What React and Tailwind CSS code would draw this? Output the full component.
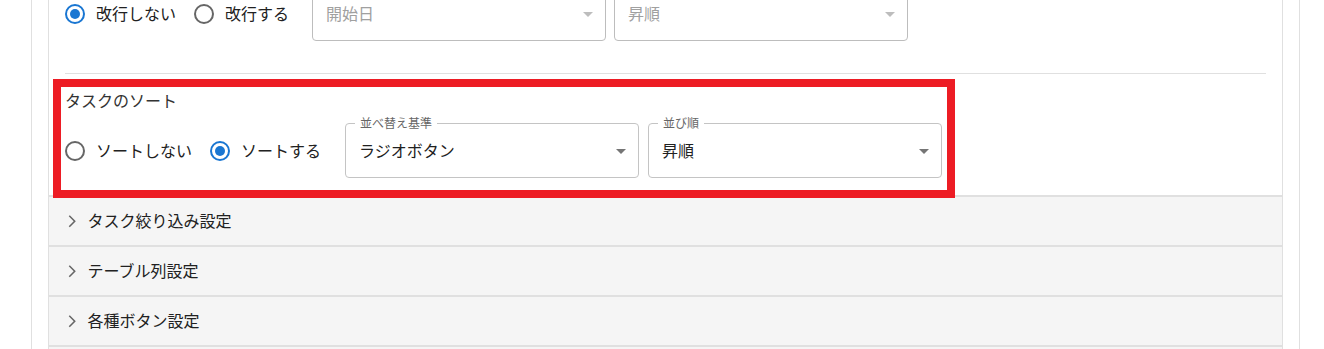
import React from 'react'

const Radio = ({ checked, label }) => (
  <label className="flex items-center">
    <span className={`flex h-5 w-5 items-center justify-center rounded-full border-2 ${checked ? 'border-[#1976d2]' : 'border-[#666]'}`}>
      {checked && <span className="h-2.5 w-2.5 rounded-full bg-[#1976d2]" />}
    </span>
    <span className="ml-[11px] pb-[2px] text-base leading-6 text-[#212121]">{label}</span>
  </label>
)

const Select = ({ label, value, disabled }) => (
  <div className={`relative flex h-[55px] w-[294px] items-center rounded border pl-[13px] ${disabled ? 'border-[#bdbdbd]' : 'border-[#c4c4c4]'}`}>
    {label && (
      <span className="absolute -top-[9px] left-[9px] bg-white px-[5px] text-xs leading-4 text-[#666]">{label}</span>
    )}
    <span className={`pb-[2px] text-base leading-6 ${disabled ? 'text-[#a0a0a0]' : 'text-[#212121]'}`}>{value}</span>
    <svg viewBox="0 0 24 24" className={`absolute right-[5px] top-1/2 h-6 w-6 -translate-y-1/2 ${disabled ? 'fill-[#bdbdbd]' : 'fill-[#757575]'}`}>
      <path d="M7 10l5 5 5-5z" />
    </svg>
  </div>
)

const AccordionRow = ({ title }) => (
  <div className="flex h-[50px] items-center border-t-2 border-[#e0e0e0] bg-[#f5f5f5] px-4">
    <svg viewBox="0 0 24 24" className="h-[14.4px] w-[14.4px] fill-[#666]">
      <path d="M6.23 20.23 8 22l10-10L8 2 6.23 3.77 14.46 12z" />
    </svg>
    <span className="ml-2 pb-[3px] text-base leading-6 text-[#212121]">{title}</span>
  </div>
)

export default function App() {
  return (
    <div className="h-[349px] w-[1324px] overflow-hidden bg-white font-['Noto_Sans_CJK_JP','Noto_Sans',sans-serif]">
      <div className="ml-[31px] flex h-full w-[1269px] flex-col border-x border-[#e0e0e0] px-4">
        <div className="-mt-[14px] border-x border-[#e0e0e0] bg-white">
          {/* 改行設定 */}
          <div className="px-4 pb-[32px]">
            <div className="flex h-[55px] items-center">
              <div className="flex gap-[18px]">
                <Radio checked label="改行しない" />
                <Radio label="改行する" />
              </div>
              <div className="ml-[23px] flex gap-[8px]">
                <Select value="開始日" disabled />
                <Select value="昇順" disabled />
              </div>
            </div>
          </div>
          <div className="mx-4 border-t border-[#e0e0e0]" />

          {/* タスクのソート */}
          <div className="relative px-4 pb-[17px] pt-[14px]">
            <div className="pb-[1px] text-base leading-6 text-[#333]">タスクのソート</div>
            <div className="mt-[10px] flex h-[55px] items-center">
              <div className="flex gap-[18px]">
                <Radio label="ソートしない" />
                <Radio checked label="ソートする" />
              </div>
              <div className="ml-[24px] flex gap-[9px]">
                <Select label="並べ替え基準" value="ラジオボタン" />
                <Select label="並び順" value="昇順" />
              </div>
            </div>
            <div className="pointer-events-none absolute left-[4px] top-[5px] h-[119px] w-[902px] border-[8px] border-[#ed1c24]" />
          </div>

          <AccordionRow title="タスク絞り込み設定" />
          <AccordionRow title="テーブル列設定" />
          <AccordionRow title="各種ボタン設定" />
          <div className="h-[50px] border-t-2 border-[#e0e0e0] bg-[#f5f5f5]" />
        </div>
      </div>
    </div>
  )
}
